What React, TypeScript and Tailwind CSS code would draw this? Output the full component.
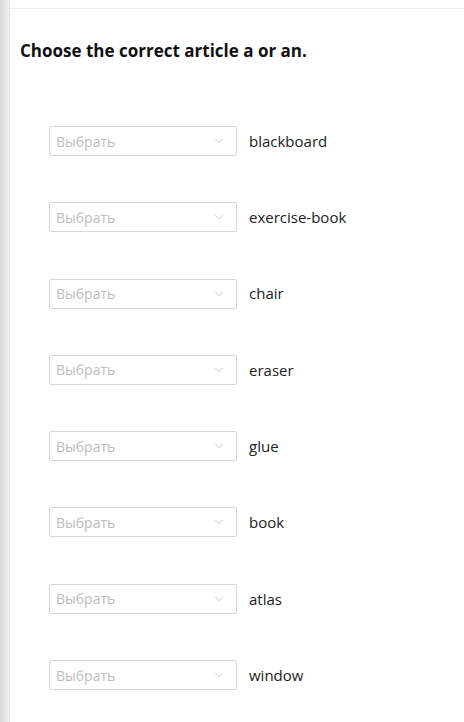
import { ChevronDown } from 'lucide-react';

const words = ['blackboard', 'exercise-book', 'chair', 'eraser', 'glue', 'book', 'atlas', 'window'];

export default function App() {
    return (
        <div className="flex h-[722px] w-[464px] overflow-hidden bg-white font-['Open_Sans',sans-serif]">
            {/* left shadow strip */}
            <div className="h-full w-[10px] shrink-0 bg-gradient-to-r from-[#d9d9d9] to-[#efefef] border-r border-[#e2e2e2]" />

            <div className="flex-1">
                <div className="h-[9px] border-b border-[#ececec]" />

                <h2 className="mt-[30px] ml-[10px] text-[17px] font-bold leading-[24px] text-[#111]">
                    Choose the correct article a or an.
                </h2>

                <div className="mt-[63px] ml-[39px] flex flex-col gap-[46.3px]">
                    {words.map((word) => (
                        <div key={word} className="flex items-center gap-[12px]">
                            <div className="flex h-[30px] w-[188px] items-center justify-between rounded-[2px] border border-[#d6d6d6] pl-[6px] pr-[10px]">
                                <span className="text-[14px] text-[#bdbdbd]">Выбрать</span>
                                <ChevronDown className="h-[14px] w-[14px] text-[#c6c6c6]" strokeWidth={1.5} />
                            </div>
                            <span className="text-[15px] text-[#222]">{word}</span>
                        </div>
                    ))}
                </div>
            </div>
        </div>
    );
}
